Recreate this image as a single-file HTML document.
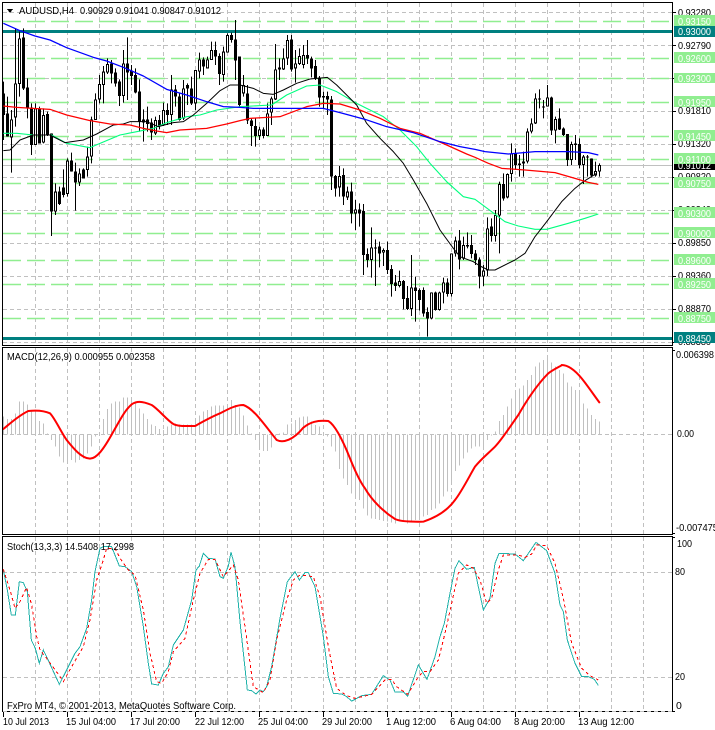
<!DOCTYPE html>
<html><head><meta charset="utf-8"><title>AUDUSD,H4</title>
<style>
html,body{margin:0;padding:0;background:#fff;width:715px;height:730px;overflow:hidden}
svg{display:block;position:absolute;left:0;top:0}
text{font-family:"Liberation Sans",sans-serif;font-size:10.5px;fill:#000}
.w{fill:#fff}
</style></head><body>
<svg width="715" height="730" viewBox="0 0 715 730" shape-rendering="crispEdges">
<rect width="715" height="730" fill="#fff"/>
<!-- grid -->
<g fill="none" stroke="#c0c0c0" stroke-width="1" stroke-dasharray="4 3">
<path d="M35.5 3V345M67.5 3V345M99.5 3V345M131.5 3V345M163.5 3V345M195.5 3V345M227.5 3V345M259.5 3V345M291.5 3V345M323.5 3V345M355.5 3V345M387.5 3V345M419.5 3V345M451.5 3V345M483.5 3V345M515.5 3V345M547.5 3V345M579.5 3V345M611.5 3V345M643.5 3V345"/>
<path d="M35.5 348V534M67.5 348V534M99.5 348V534M131.5 348V534M163.5 348V534M195.5 348V534M227.5 348V534M259.5 348V534M291.5 348V534M323.5 348V534M355.5 348V534M387.5 348V534M419.5 348V534M451.5 348V534M483.5 348V534M515.5 348V534M547.5 348V534M579.5 348V534M611.5 348V534M643.5 348V534"/>
<path d="M35.5 537V711M67.5 537V711M99.5 537V711M131.5 537V711M163.5 537V711M195.5 537V711M227.5 537V711M259.5 537V711M291.5 537V711M323.5 537V711M355.5 537V711M387.5 537V711M419.5 537V711M451.5 537V711M483.5 537V711M515.5 537V711M547.5 537V711M579.5 537V711M611.5 537V711M643.5 537V711"/>
<path d="M3 12.5H672M3 45.5H672M3 78.5H672M3 111.5H672M3 144.5H672M3 177.5H672M3 210.5H672M3 243.5H672M3 276.5H672M3 309.5H672M3 342.5H672"/>
<path d="M3 434.5H672M3 572.5H672M3 677.5H672"/>
</g>
<!-- horizontal objects -->
<path d="M3 165.5H672" stroke="#c0c0c0" fill="none"/>
<path shape-rendering="auto" d="M3 21.5H672M3 58.5H672M3 78.5H672M3 102.5H672M3 136.5H672M3 159.5H672M3 183.5H672M3 213.5H672M3 233.5H672M3 260.5H672M3 284.5H672M3 318.5H672" stroke="#90ee90" stroke-width="1.5" stroke-dasharray="18 6" fill="none"/>
<rect x="3" y="30" width="669" height="3" fill="#008080"/>
<rect x="3" y="337" width="669" height="3" fill="#008080"/>
<!-- candles -->
<g transform="scale(1 .33333)" fill="none">
<path stroke="#000" stroke-width="1" d="M3.5 245V420M7.5 290V410M11.5 330V518M15.5 85V380M19.5 95V290M23.5 85V270M27.5 235V355M31.5 310V465M35.5 310V435M39.5 320V430M43.5 325V430M47.5 335V408M51.5 400V708M55.5 550V645M59.5 560V615M63.5 508V592M67.5 475V590M71.5 458V515M75.5 488V632M79.5 505V558M83.5 505V535M87.5 440V530M91.5 350V490M95.5 280V360M99.5 225V310M103.5 198V310M107.5 175V222M111.5 180V250M115.5 205V260M119.5 238V318M123.5 150V308M127.5 112V300M131.5 195V255M135.5 205V280M139.5 238V395M143.5 328V425M147.5 320V395M151.5 355V420M155.5 350V405M159.5 345V388M163.5 308V378M167.5 310V375M171.5 225V375M175.5 255V320M179.5 280V362M183.5 240V360M187.5 250V315M191.5 230V315M195.5 210V330M199.5 158V235M203.5 172V225M207.5 170V205M211.5 125V180M215.5 125V195M219.5 160V255M223.5 140V245M227.5 100V158M231.5 98V128M235.5 60V240M239.5 170V320M243.5 225V290M247.5 255V372M251.5 355V438M255.5 355V440M259.5 380V420M263.5 382V415M267.5 310V408M271.5 290V375M275.5 132V300M279.5 175V240M283.5 145V210M287.5 105V195M291.5 105V215M295.5 150V248M299.5 145V195M303.5 135V205M307.5 120V192M311.5 170V232M315.5 180V240M319.5 228V320M323.5 275V325M327.5 275V345M331.5 288V570M335.5 525V590M339.5 498V590M343.5 505V615M347.5 560V600M351.5 548V670M355.5 600V690M359.5 610V680M363.5 612V825M367.5 745V802M371.5 682V833M375.5 718V858M379.5 725V802M383.5 745V798M387.5 725V822M391.5 795V890M395.5 825V873M399.5 812V862M403.5 840V928M407.5 858V930M411.5 765V948M415.5 830V965M419.5 865V932M423.5 862V950M427.5 922V1010M431.5 877V958M435.5 875V932M439.5 875V932M443.5 833V910M447.5 835V890M451.5 760V890M455.5 710V770M459.5 690V808M463.5 710V780M467.5 697V745M471.5 705V775M475.5 750V795M479.5 772V865M483.5 795V858M487.5 652V828M491.5 655V725M495.5 630V725M499.5 545V760M503.5 520V602M507.5 520V595M511.5 430V545M515.5 445V510M519.5 465V530M523.5 455V530M527.5 385V490M531.5 355V400M535.5 280V372M539.5 268V325M543.5 300V355M547.5 255V320M551.5 290V405M555.5 350V430M559.5 325V390M563.5 382V408M567.5 402V498M571.5 425V495M575.5 405V480M579.5 415V505M583.5 465V552M587.5 465V530M591.5 475V532M595.5 485V530M599.5 490V530"/>
<path stroke="#000" stroke-width="3" d="M3.5 280V345M7.5 340V410M11.5 358V412M15.5 250V352M19.5 115V252M23.5 112V265M27.5 262V325M31.5 322V435M35.5 325V435M39.5 325V430M43.5 345V428M47.5 342V405M51.5 400V635M55.5 575V635M59.5 575V612M63.5 562V585M67.5 482V582M71.5 482V515M75.5 515V548M79.5 520V548M83.5 508V535M87.5 470V510M91.5 358V470M95.5 298V360M99.5 252V298M103.5 215V255M107.5 192V218M111.5 190V220M115.5 218V250M119.5 245V288M123.5 190V288M127.5 190V218M131.5 212V228M135.5 225V278M139.5 275V365M143.5 358V368M147.5 358V372M151.5 368V398M155.5 360V400M159.5 360V380M163.5 330V375M167.5 330V345M171.5 268V345M175.5 268V290M179.5 290V360M183.5 265V355M187.5 255V265M191.5 265V310M195.5 210V310M199.5 178V215M203.5 178V200M207.5 178V205M211.5 150V180M215.5 150V170M219.5 168V222M223.5 155V225M227.5 105V158M231.5 105V120M235.5 118V182M239.5 170V315M243.5 255V280M247.5 280V362M251.5 362V378M255.5 378V408M259.5 388V408M263.5 388V408M267.5 340V408M271.5 295V338M275.5 208V298M279.5 202V208M283.5 175V208M287.5 120V175M291.5 118V208M295.5 190V205M299.5 168V192M303.5 165V195M307.5 165V175M311.5 175V205M315.5 198V235M319.5 232V292M323.5 288V292M327.5 288V298M331.5 298V530M335.5 528V565M339.5 528V562M343.5 525V590M347.5 575V592M351.5 575V640M355.5 628V640M359.5 628V640M363.5 633V765M367.5 762V780M371.5 742V780M375.5 742V746M379.5 740V760M383.5 750V758M387.5 750V810M391.5 807V852M395.5 848V858M399.5 843V858M403.5 843V897M407.5 894V927M411.5 862V927M415.5 862V873M419.5 870V900M423.5 870V940M427.5 936V956M431.5 877V956M435.5 877V930M439.5 877V930M443.5 847V878M447.5 847V882M451.5 760V882M455.5 722V760M459.5 722V778M463.5 735V775M467.5 735V740M471.5 735V762M475.5 760V780M479.5 778V830M483.5 812V830M487.5 685V812M491.5 680V708M495.5 645V708M499.5 552V647M503.5 552V595M507.5 522V592M511.5 460V522M515.5 460V495M519.5 490V495M523.5 484V490M527.5 395V485M531.5 370V395M535.5 295V370M539.5 295V298M543.5 320V323M547.5 292V320M551.5 292V392M555.5 357V392M559.5 355V388M563.5 385V405M567.5 402V480M571.5 432V480M575.5 430V435M579.5 432V495M583.5 470V495M587.5 470V473M591.5 475V527M595.5 513V527M599.5 495V515"/>
<path stroke="#fff" stroke-width="1" d="M11.5 361V409M15.5 253V349M19.5 118V249M35.5 328V432M43.5 348V425M55.5 578V632M67.5 485V579M79.5 523V545M87.5 473V507M91.5 361V467M95.5 301V357M99.5 255V295M103.5 218V252M107.5 195V215M123.5 193V285M155.5 363V397M163.5 333V372M171.5 271V342M183.5 268V352M195.5 213V307M199.5 181V212M207.5 181V202M211.5 153V177M223.5 158V222M227.5 108V155M243.5 258V277M259.5 391V405M267.5 343V405M271.5 298V335M275.5 211V295M283.5 178V205M287.5 123V172M295.5 193V202M299.5 171V189M303.5 168V192M339.5 531V559M347.5 578V589M355.5 631V637M371.5 745V777M383.5 753V755M399.5 846V855M411.5 865V924M431.5 880V953M439.5 880V927M443.5 850V875M451.5 763V879M455.5 725V757M463.5 738V772M483.5 815V827M487.5 688V809M495.5 648V705M499.5 555V644M507.5 525V589M511.5 463V519M527.5 398V482M531.5 373V392M535.5 298V367M547.5 295V317M555.5 360V389M571.5 435V477M583.5 473V492M595.5 516V524M599.5 498V512"/>
</g>
<!-- moving averages -->
<g transform="scale(.33333)" fill="none" stroke-linejoin="round" shape-rendering="auto">
<polyline stroke="#00ff7f" stroke-width="3.3" points="10,400 50,400 100,405 155,405 200,430 270,443 300,430 360,405 410,395 460,385 500,368 560,350 600,345 650,330 720,320 815,315 860,285 920,258 960,255 1010,275 1070,310 1150,350 1200,390 1250,440 1290,490 1340,545 1390,590 1425,598 1475,635 1515,665 1555,678 1605,688 1640,688 1705,670 1755,655 1795,642"/>
<polyline stroke="#000" stroke-width="3" points="10,452 30,450 60,420 100,405 150,405 195,428 250,420 290,402 340,375 370,372 390,365 440,365 475,380 520,368 550,365 580,345 620,310 660,272 690,255 720,255 760,265 790,280 820,283 850,270 890,250 930,237 982,232 1010,255 1070,315 1100,370 1140,415 1180,455 1210,490 1240,540 1280,610 1320,690 1360,745 1380,770 1420,785 1440,798 1465,810 1485,810 1545,780 1575,760 1605,710 1640,665 1685,605 1725,565 1750,545 1790,520"/>
<polyline stroke="#ff0000" stroke-width="3.8" points="10,318 50,322 100,325 150,328 200,345 270,362 330,372 390,375 430,385 470,393 500,398 540,390 620,385 680,372 720,362 750,355 840,350 920,320 970,310 1020,312 1080,330 1140,355 1200,385 1260,400 1340,435 1400,462 1425,472 1465,490 1505,505 1575,510 1665,518 1725,535 1765,547 1795,553"/>
<polyline stroke="#0000ff" stroke-width="3.8" points="10,70 60,92 105,108 150,120 200,143 280,172 320,183 370,202 430,228 500,268 560,285 620,305 670,320 720,322 760,325 820,325 970,325 1020,338 1095,358 1160,380 1240,398 1320,425 1380,440 1425,448 1455,455 1525,462 1605,455 1705,455 1765,458 1795,465"/>
</g>
<!-- MACD -->
<g transform="translate(0 345) scale(.33333)" fill="none">
<path stroke="#c0c0c0" stroke-width="3" d="M10.5 268V215M22.5 268V222M34.5 268V222M46.5 268V205M58.5 268V170M70.5 268V170M82.5 268V178M94.5 268V200M106.5 268V205M118.5 268V228M130.5 268V235M142.5 268V265M154.5 268V285M166.5 268V305M178.5 268V335M190.5 268V352M202.5 268V350M214.5 268V345M226.5 268V352M238.5 268V345M250.5 268V340M262.5 268V325M274.5 268V305M286.5 268V275M298.5 268V265M310.5 268V222M322.5 268V192M334.5 268V175M346.5 268V170M358.5 268V170M370.5 268V158M382.5 268V158M394.5 268V160M406.5 268V172M418.5 268V190M430.5 268V205M442.5 268V222M454.5 268V238M466.5 268V243M478.5 268V252M490.5 268V255M502.5 268V245M514.5 268V238M526.5 268V235M538.5 268V238M550.5 268V238M562.5 268V238M574.5 268V238M586.5 268V225M598.5 268V212M610.5 268V200M622.5 268V195M634.5 268V185M646.5 268V182M658.5 268V182M670.5 268V182M682.5 268V182M694.5 268V165M706.5 268V180M718.5 268V188M730.5 268V212M742.5 268V242M754.5 268V265M766.5 268V285M778.5 268V305M790.5 268V318M802.5 268V318M814.5 268V308M826.5 268V275M838.5 268V265M850.5 268V262M862.5 268V238M874.5 268V235M886.5 268V225M898.5 268V218M910.5 268V215M922.5 268V215M934.5 268V230M946.5 268V240M958.5 268V245M970.5 268V262M982.5 268V275M994.5 268V305M1006.5 268V320M1018.5 268V372M1030.5 268V400M1042.5 268V420M1054.5 268V445M1066.5 268V455M1078.5 268V465M1090.5 268V490M1102.5 268V512M1114.5 268V520M1126.5 268V522M1138.5 268V525M1150.5 268V528M1162.5 268V530M1174.5 268V532M1186.5 268V535M1198.5 268V530M1210.5 268V530M1222.5 268V535M1234.5 268V530M1246.5 268V525M1258.5 268V525M1270.5 268V515M1282.5 268V510M1294.5 268V495M1306.5 268V490M1318.5 268V475M1330.5 268V455M1342.5 268V440M1354.5 268V420M1366.5 268V378M1378.5 268V362M1390.5 268V340M1402.5 268V322M1414.5 268V310M1426.5 268V305M1438.5 268V305M1450.5 268V305M1462.5 268V285M1474.5 268V272M1486.5 268V260M1498.5 268V228M1510.5 268V210M1522.5 268V185M1534.5 268V160M1546.5 268V140M1558.5 268V130M1570.5 268V122M1582.5 268V105M1594.5 268V90M1606.5 268V65M1618.5 268V52M1630.5 268V45M1642.5 268V35M1654.5 268V52M1666.5 268V65M1678.5 268V75M1690.5 268V85M1702.5 268V112M1714.5 268V125M1726.5 268V135M1738.5 268V145M1750.5 268V175M1762.5 268V190M1774.5 268V210M1786.5 268V222M1798.5 268V230"/>
<path shape-rendering="auto" stroke="#ff0000" stroke-width="6" stroke-linejoin="round" stroke-linecap="round" d="M10 252C30 236 55 212 85 198C105 196 130 196 150 205C165 220 185 265 200 285C220 310 245 340 270 341C290 340 310 315 340 260C360 225 375 195 395 178C410 168 425 168 455 180C475 192 500 225 520 237C535 245 560 243 585 243C605 232 635 215 660 205C680 195 705 180 730 180C760 190 790 235 830 285C850 295 880 285 910 248C930 232 950 225 985 228C1005 240 1030 290 1050 340C1060 365 1080 410 1095 430C1115 465 1150 500 1185 522C1205 532 1250 530 1270 530C1300 520 1340 500 1365 465C1385 440 1410 390 1425 365C1445 340 1465 325 1485 305C1505 285 1530 245 1555 210C1575 175 1610 120 1645 85C1665 70 1690 60 1685 60C1700 60 1720 70 1745 100C1765 125 1785 155 1798 172"/>
</g>
<!-- Stochastic -->
<g transform="translate(0 530) scale(.33333)" fill="none">
<polyline stroke="#20b2aa" stroke-width="3" points="10,120 22,180 34,255 46,255 58,155 70,158 82,185 94,330 106,355 118,400 130,360 142,385 178,463 200,420 225,370 240,350 260,295 275,210 285,125 300,55 310,50 335,50 358,108 375,110 395,125 410,170 430,290 445,400 455,462 475,465 490,430 505,410 520,345 550,300 575,210 588,120 598,108 610,70 625,85 645,87 660,140 670,145 685,108 693,67 705,110 720,275 742,480 755,482 768,492 780,480 790,485 800,470 815,410 840,265 862,155 885,125 898,150 915,128 925,128 945,170 970,320 985,440 1000,490 1025,492 1040,500 1055,513 1065,508 1085,497 1115,493 1150,437 1170,450 1185,486 1210,486 1223,498 1255,405 1281,448 1305,380 1320,320 1333,280 1350,190 1365,115 1377,92 1400,118 1423,112 1435,170 1450,240 1470,205 1485,100 1497,70 1545,72 1570,92 1608,37 1640,62 1665,130 1680,225 1690,245 1702,330 1725,400 1745,440 1765,440 1783,448 1795,466"/>
<polyline stroke="#ff0000" stroke-width="3" stroke-dasharray="9 9" points="10,118 30,180 45,235 60,215 80,172 95,225 110,320 120,360 140,385 180,440 190,455 215,410 250,350 270,270 290,150 310,90 320,55 345,55 360,85 385,120 405,135 430,240 450,370 470,455 485,460 505,425 520,365 555,325 580,210 600,130 625,88 645,88 670,140 700,105 715,150 735,290 760,470 790,488 810,450 830,330 860,210 880,150 900,135 940,140 960,200 985,350 1010,475 1040,497 1065,505 1095,498 1115,493 1155,450 1175,448 1190,470 1223,493 1255,440 1270,425 1290,425 1315,390 1335,310 1355,220 1375,130 1400,105 1420,115 1440,150 1460,220 1475,205 1495,120 1510,75 1555,75 1575,82 1595,72 1610,45 1640,47 1665,100 1690,205 1715,340 1745,415 1770,437 1795,450"/>
</g>
<!-- frames -->
<g fill="#000">
<rect x="2" y="2" width="671" height="1"/>
<rect x="2" y="345" width="671" height="1"/>
<rect x="2" y="347" width="671" height="1"/>
<rect x="2" y="534" width="671" height="1"/>
<rect x="2" y="536" width="671" height="1"/>
<rect x="2" y="2" width="1" height="344"/>
<rect x="2" y="347" width="1" height="188"/>
<rect x="2" y="536" width="1" height="176"/>
<rect x="672" y="2" width="1" height="344"/>
<rect x="672" y="347" width="1" height="188"/>
<rect x="672" y="536" width="1" height="176"/>
<rect x="2" y="711" width="671" height="1"/>
</g>
<path d="M3 711.5H672" stroke="#c0c0c0" stroke-dasharray="4 3" fill="none"/>
<path stroke="#000" fill="none" d="M672 12.5h4M672 45.5h4M672 78.5h4M672 111.5h4M672 144.5h4M672 177.5h4M672 210.5h4M672 243.5h4M672 276.5h4M672 309.5h4M672 342.5h4M672 350.5h3M672 533.5h3M672 537.5h3M672 711.5h3M3.5 712v5M67.5 712v5M131.5 712v5M195.5 712v5M259.5 712v5M323.5 712v5M387.5 712v5M451.5 712v5M515.5 712v5M579.5 712v5"/>
<!-- arrow -->
<polygon points="7,9 13,9 10,13" fill="#000"/>
<g shape-rendering="auto">
<text x="19" y="14" textLength="55" lengthAdjust="spacingAndGlyphs">AUDUSD,H4</text>
<text x="80" y="14" textLength="141" lengthAdjust="spacingAndGlyphs">0.90929 0.91041 0.90847 0.91012</text>
<text x="7" y="360" textLength="148" lengthAdjust="spacingAndGlyphs">MACD(12,26,9) 0.000955 0.002358</text>
<text x="7" y="550" textLength="127" lengthAdjust="spacingAndGlyphs">Stoch(13,3,3) 14.5408 17.2998</text>
<text x="7" y="709" textLength="229" lengthAdjust="spacingAndGlyphs">FxPro MT4, © 2001-2013, MetaQuotes Software Corp.</text>
<!-- time axis -->
<text x="3" y="725" textLength="46" lengthAdjust="spacingAndGlyphs">10 Jul 2013</text>
<text x="66" y="725" textLength="50" lengthAdjust="spacingAndGlyphs">15 Jul 04:00</text>
<text x="130" y="725" textLength="50" lengthAdjust="spacingAndGlyphs">17 Jul 20:00</text>
<text x="195" y="725" textLength="49" lengthAdjust="spacingAndGlyphs">22 Jul 12:00</text>
<text x="258" y="725" textLength="50" lengthAdjust="spacingAndGlyphs">25 Jul 04:00</text>
<text x="322" y="725" textLength="50" lengthAdjust="spacingAndGlyphs">29 Jul 20:00</text>
<text x="386" y="725" textLength="50" lengthAdjust="spacingAndGlyphs">1 Aug 12:00</text>
<text x="450" y="725" textLength="51" lengthAdjust="spacingAndGlyphs">6 Aug 04:00</text>
<text x="514" y="725" textLength="51" lengthAdjust="spacingAndGlyphs">8 Aug 20:00</text>
<text x="578" y="725" textLength="56" lengthAdjust="spacingAndGlyphs">13 Aug 12:00</text>
<!-- price axis plain -->
<text x="678" y="16" textLength="33" lengthAdjust="spacingAndGlyphs">0.93280</text>
<text x="678" y="49" textLength="33" lengthAdjust="spacingAndGlyphs">0.92790</text>
<text x="678" y="114" textLength="33" lengthAdjust="spacingAndGlyphs">0.91810</text>
<text x="678" y="147" textLength="33" lengthAdjust="spacingAndGlyphs">0.91320</text>
<text x="678" y="180" textLength="33" lengthAdjust="spacingAndGlyphs">0.90820</text>
<text x="678" y="213" textLength="33" lengthAdjust="spacingAndGlyphs">0.90340</text>
<text x="678" y="246" textLength="33" lengthAdjust="spacingAndGlyphs">0.89850</text>
<text x="678" y="279" textLength="33" lengthAdjust="spacingAndGlyphs">0.89360</text>
<text x="678" y="312" textLength="33" lengthAdjust="spacingAndGlyphs">0.88870</text>
<text x="678" y="345" textLength="33" lengthAdjust="spacingAndGlyphs">0.88380</text>
</g>
<!-- current price -->
<rect x="674" y="160" width="41" height="10" fill="#000"/>
<g shape-rendering="auto"><text class="w" x="678" y="169" textLength="33" lengthAdjust="spacingAndGlyphs">0.91012</text></g>
<!-- green tags -->
<g fill="#90ee90">
<rect x="674" y="15" width="41" height="11"/>
<rect x="674" y="52" width="41" height="11"/>
<rect x="674" y="73" width="41" height="10"/>
<rect x="674" y="96" width="41" height="11"/>
<rect x="674" y="130" width="41" height="11"/>
<rect x="674" y="153" width="41" height="11"/>
<rect x="674" y="177" width="41" height="11"/>
<rect x="674" y="207" width="41" height="11"/>
<rect x="674" y="227" width="41" height="11"/>
<rect x="674" y="254" width="41" height="11"/>
<rect x="674" y="278" width="41" height="11"/>
<rect x="674" y="312" width="41" height="11"/>
</g>
<g fill="#008080">
<rect x="674" y="26" width="41" height="11"/>
<rect x="674" y="332" width="41" height="11"/>
</g>
<g shape-rendering="auto">
<text class="w" x="678" y="25" textLength="33" lengthAdjust="spacingAndGlyphs">0.93150</text>
<text class="w" x="678" y="35" textLength="33" lengthAdjust="spacingAndGlyphs">0.93000</text>
<text class="w" x="678" y="62" textLength="33" lengthAdjust="spacingAndGlyphs">0.92600</text>
<text class="w" x="678" y="82" textLength="33" lengthAdjust="spacingAndGlyphs">0.92300</text>
<text class="w" x="678" y="106" textLength="33" lengthAdjust="spacingAndGlyphs">0.91950</text>
<text class="w" x="678" y="140" textLength="33" lengthAdjust="spacingAndGlyphs">0.91450</text>
<text class="w" x="678" y="163" textLength="33" lengthAdjust="spacingAndGlyphs">0.91100</text>
<text class="w" x="678" y="187" textLength="33" lengthAdjust="spacingAndGlyphs">0.90750</text>
<text class="w" x="678" y="217" textLength="33" lengthAdjust="spacingAndGlyphs">0.90300</text>
<text class="w" x="678" y="237" textLength="33" lengthAdjust="spacingAndGlyphs">0.90000</text>
<text class="w" x="678" y="264" textLength="33" lengthAdjust="spacingAndGlyphs">0.89600</text>
<text class="w" x="678" y="288" textLength="33" lengthAdjust="spacingAndGlyphs">0.89250</text>
<text class="w" x="678" y="322" textLength="33" lengthAdjust="spacingAndGlyphs">0.88750</text>
<text class="w" x="678" y="342" textLength="33" lengthAdjust="spacingAndGlyphs">0.88450</text>
<!-- MACD axis -->
<text x="676" y="358" textLength="38" lengthAdjust="spacingAndGlyphs">0.006398</text>
<text x="677" y="437" textLength="17" lengthAdjust="spacingAndGlyphs">0.00</text>
<text x="676" y="531" textLength="42" lengthAdjust="spacingAndGlyphs">-0.007475</text>
<!-- Stoch axis -->
<text x="677" y="547" textLength="15" lengthAdjust="spacingAndGlyphs">100</text>
<text x="675" y="575" textLength="10" lengthAdjust="spacingAndGlyphs">80</text>
<text x="675" y="680" textLength="10" lengthAdjust="spacingAndGlyphs">20</text>
<text x="676" y="709">0</text>
</g>
</svg>
</body></html>
